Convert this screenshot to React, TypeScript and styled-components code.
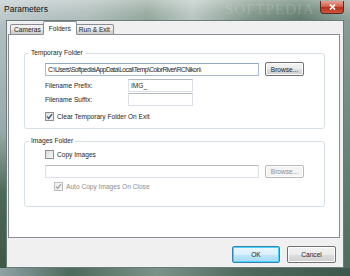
import React from 'react';
import styled, { createGlobalStyle } from 'styled-components';

const Global = createGlobalStyle`
  html, body { margin: 0; padding: 0; }
  body {
    width: 350px;
    height: 276px;
    overflow: hidden;
    font-family: "Liberation Sans", Arial, sans-serif;
    font-size: 6.6px;
    color: #1e1e1e;
  }
`;

const Window = styled.div`
  width: 350px;
  height: 276px;
  display: flex;
  flex-direction: column;
  background: linear-gradient(90deg, #bcc7ca 0%, #aebcba 25%, #92a69b 42%, #b9c6c1 55%, #7c9386 72%, #5f7a6b 86%, #8fa39a 100%);
  position: relative;
  overflow: hidden;
`;

const TitleBar = styled.div`
  height: 20px;
  display: flex;
  align-items: flex-start;
  justify-content: space-between;
  padding: 0 6px 0 4px;
  box-sizing: border-box;
  background: linear-gradient(180deg, rgba(255,255,255,0.35) 0%, rgba(255,255,255,0.1) 60%, rgba(255,255,255,0) 100%);
  position: relative;
`;

const Title = styled.span`
  font-size: 8.5px;
  color: #111;
  margin-top: 4px;
`;

const Watermark = styled.span<{ left: number; top: number; size: number }>`
  position: absolute;
  left: ${p => p.left}px;
  top: ${p => p.top}px;
  font-family: "Liberation Serif", serif;
  font-size: ${p => p.size}px;
  letter-spacing: 1px;
  color: rgba(255, 255, 255, 0.16);
  pointer-events: none;
`;

const CloseButton = styled.div`
  width: 22px;
  height: 12px;
  margin-top: 1px;
  border: 1px solid #5c2a22;
  border-top: none;
  border-radius: 0 0 4px 4px;
  background: linear-gradient(180deg, #e8a191 0%, #d4624c 45%, #b8311b 55%, #d0563c 100%);
  display: flex;
  align-items: center;
  justify-content: center;
`;

const Middle = styled.div`
  flex: 1;
  display: flex;
`;

const SideFrame = styled.div<{ w: number; bg: string }>`
  width: ${p => p.w}px;
  background: ${p => p.bg};
`;

const Client = styled.div`
  flex: 1;
  background: #f0f0f0;
  border: 1px solid #6a7c78;
  display: flex;
  flex-direction: column;
  padding: 0 3px 0 1px;
`;

const BottomFrame = styled.div`
  height: 8px;
  background: linear-gradient(90deg, #8fa2a6 0%, #4e6a5c 20%, #7b9288 45%, #50695d 70%, #3e574b 100%);
`;

const TabRow = styled.div`
  height: 14px;
  display: flex;
  align-items: flex-end;
  padding-left: 2px;
  position: relative;
  z-index: 1;
`;

const Tab = styled.div<{ active?: boolean }>`
  height: ${p => (p.active ? 14 : 11)}px;
  padding: 0 ${p => (p.active ? 5 : 3)}px;
  margin: 0 ${p => (p.active ? -2 : 0)}px;
  box-sizing: border-box;
  border: 1px solid #898c95;
  border-bottom: ${p => (p.active ? '1px solid #fff' : '1px solid #898c95')};
  border-radius: 2px 2px 0 0;
  background: ${p => (p.active ? '#fff' : 'linear-gradient(180deg, #f2f2f2 0%, #ebebeb 50%, #dcdcdc 51%, #cfcfcf 100%)')};
  display: flex;
  align-items: center;
  position: relative;
  z-index: ${p => (p.active ? 2 : 1)};
  color: #1e1e1e;
`;

const Panel = styled.div`
  height: 204px;
  box-sizing: border-box;
  margin-top: -1px;
  background: #fff;
  border: 1px solid #898c95;
  padding: 13px 14px 0 15px;
  display: flex;
  flex-direction: column;
  gap: 7px;
`;

const Group = styled.fieldset<{ h: number }>`
  margin: 0;
  height: ${p => p.h}px;
  box-sizing: border-box;
  border: 1px solid #d5dfe5;
  border-radius: 3px;
  padding: 4px 18px 0 20px;
  display: flex;
  flex-direction: column;
  gap: 3px;
`;

const Legend = styled.legend`
  padding: 0 2px;
  margin-left: -16px;
  line-height: 10px;
  color: #1e1e1e;
`;

const Row = styled.div<{ mt?: number; indent?: number }>`
  display: flex;
  align-items: center;
  margin-top: ${p => p.mt ?? 0}px;
  margin-left: ${p => p.indent ?? 0}px;
`;

const FieldLabel = styled.span`
  width: 83px;
  flex-shrink: 0;
`;

const TextBox = styled.div<{ w: number; focused?: boolean; tight?: boolean }>`
  width: ${p => p.w}px;
  height: 13px;
  box-sizing: border-box;
  border: 1px solid ${p => (p.focused ? '#a7bcd4' : '#dbe1e6')};
  border-top-color: ${p => (p.focused ? '#8fa8c6' : '#b5bac0')};
  background: #fff;
  padding: 0 2px;
  display: flex;
  align-items: center;
  white-space: nowrap;
  overflow: hidden;
  letter-spacing: ${p => (p.tight ? '-0.5px' : 'normal')};
`;

const Button = styled.div<{ w: number; h: number; disabled?: boolean; primary?: boolean }>`
  width: ${p => p.w}px;
  height: ${p => p.h}px;
  box-sizing: border-box;
  border: 1px solid ${p => (p.disabled ? '#b8bbbe' : p.primary ? '#3c7fb1' : '#707070')};
  border-radius: 2px;
  box-shadow: inset 0 0 0 1px ${p => (p.primary ? '#48d3fb' : '#fcfcfc')};
  background: ${p =>
    p.disabled
      ? '#f4f4f4'
      : p.primary
      ? 'linear-gradient(180deg, #eaf6fd 0%, #d9f0fc 50%, #bee6fd 51%, #a7d9f5 100%)'
      : 'linear-gradient(180deg, #f2f2f2 0%, #ebebeb 50%, #dddddd 51%, #cfcfcf 100%)'};
  color: ${p => (p.disabled ? '#8d8d8d' : '#1e1e1e')};
  display: flex;
  align-items: center;
  justify-content: center;
  flex-shrink: 0;
`;

const Gap = styled.div<{ w: number }>`
  width: ${p => p.w}px;
  flex-shrink: 0;
`;

const Box = styled.span<{ disabled?: boolean }>`
  width: 9px;
  height: 9px;
  box-sizing: border-box;
  border: 1px solid ${p => (p.disabled ? '#bcbcbc' : '#8e8f8f')};
  background: ${p => (p.disabled ? '#f4f4f4' : 'linear-gradient(135deg, #dcdcdc 0%, #f6f6f6 100%)')};
  margin-right: 3px;
  display: flex;
  align-items: center;
  justify-content: center;
  flex-shrink: 0;
`;

const CheckText = styled.span<{ disabled?: boolean }>`
  color: ${p => (p.disabled ? '#8d8d8d' : '#1e1e1e')};
`;

const Footer = styled.div`
  flex: 1;
  display: flex;
  justify-content: flex-end;
  align-items: flex-start;
  padding: 8px 4px 0 0;
  gap: 7px;
`;

function CheckBox({ checked, disabled, label }: { checked?: boolean; disabled?: boolean; label: string }) {
  return (
    <>
      <Box disabled={disabled}>
        {checked && (
          <svg width="7" height="7" viewBox="0 0 7 7">
            <path d="M1 3.6 L2.8 5.4 L6 1.2" fill="none" stroke={disabled ? '#a7a7a7' : '#3f5a8a'} strokeWidth="1.4" />
          </svg>
        )}
      </Box>
      <CheckText disabled={disabled}>{label}</CheckText>
    </>
  );
}

export default function App() {
  return (
    <>
      <Global />
      <Window>
        <TitleBar>
          <Title>Parameters</Title>
          <Watermark left={225} top={1} size={15}>SOFTPEDIA</Watermark>
          <CloseButton>
            <svg width="7" height="6" viewBox="0 0 7 6">
              <path d="M1 0.5 L6 5.5 M6 0.5 L1 5.5" stroke="#fff" strokeWidth="1.6" />
            </svg>
          </CloseButton>
        </TitleBar>
        <Middle>
          <SideFrame w={6} bg="linear-gradient(180deg, #b3c0c4 0%, #98aaa8 45%, #4b6a55 70%, #3c5a46 100%)" />
          <Client>
            <TabRow>
              <Tab>Cameras</Tab>
              <Tab active>Folders</Tab>
              <Tab>Run &amp; Exit</Tab>
            </TabRow>
            <Panel>
              <Group h={81}>
                <Legend>Temporary Folder</Legend>
                <Row>
                  <TextBox w={214} focused tight>C:\Users\Softpedia\AppData\Local\Temp\ColorRiver\RCNikon\</TextBox>
                  <Gap w={6} />
                  <Button w={39} h={14}>Browse...</Button>
                </Row>
                <Row>
                  <FieldLabel>Filename Prefix:</FieldLabel>
                  <TextBox w={65}>IMG_</TextBox>
                </Row>
                <Row mt={-2}>
                  <FieldLabel>Filename Suffix:</FieldLabel>
                  <TextBox w={65} />
                </Row>
                <Row mt={3}>
                  <CheckBox checked label="Clear Temporary Folder On Exit" />
                </Row>
              </Group>
              <Group h={71}>
                <Legend>Images Folder</Legend>
                <Row>
                  <CheckBox label="Copy Images" />
                </Row>
                <Row mt={3}>
                  <TextBox w={214} />
                  <Gap w={6} />
                  <Button w={39} h={13} disabled>Browse...</Button>
                </Row>
                <Row indent={9} mt={1}>
                  <CheckBox checked disabled label="Auto Copy Images On Close" />
                </Row>
              </Group>
            </Panel>
            <Footer>
              <Button w={48} h={17} primary>OK</Button>
              <Button w={49} h={17}>Cancel</Button>
            </Footer>
          </Client>
          <SideFrame w={6} bg="linear-gradient(180deg, #8a9c98 0%, #6f8a80 40%, #4e6b5d 100%)" />
        </Middle>
        <BottomFrame />
      </Window>
    </>
  );
}
